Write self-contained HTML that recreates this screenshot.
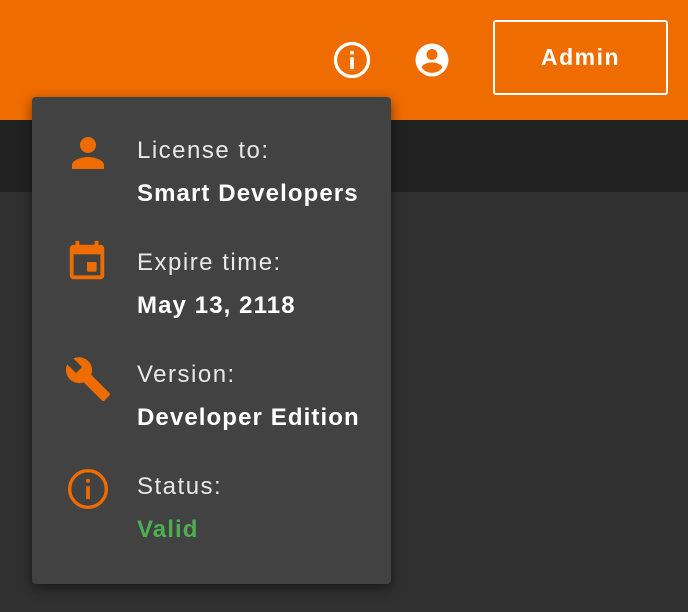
<!DOCTYPE html>
<html><head><style>
body{margin:0;width:688px;height:612px;background:#303030;font-family:"Liberation Sans",sans-serif;position:relative;overflow:hidden}
.hdr{position:absolute;left:0;top:0;width:688px;height:120px;background:#ef6c00}
.band{position:absolute;left:0;top:120px;width:688px;height:72px;background:#212121}
.btn{position:absolute;left:493px;top:20px;width:171px;height:71px;border:2px solid #fff;border-radius:3px;color:#fff;font-size:23px;font-weight:bold;text-align:center;line-height:71px;letter-spacing:1.5px}
.pop{position:absolute;left:32px;top:97px;width:359px;height:487px;background:#424242;border-radius:4px;box-shadow:0 4px 12px rgba(0,0,0,.5)}
.l{position:absolute;left:105px;color:#e8e8e8;font-size:24px;letter-spacing:1.5px}
.v{position:absolute;left:105px;color:#fff;font-size:24px;font-weight:bold;letter-spacing:1.1px}
svg{position:absolute}
</style></head><body>
<div class="hdr"></div><div class="band"></div>
<svg style="left:330px;top:38px" width="44" height="44" viewBox="0 0 24 24"><circle cx="12" cy="12" r="9" fill="none" stroke="#fff" stroke-width="1.8"/><rect x="11" y="10.5" width="2" height="6.5" fill="#fff"/><rect x="11" y="7" width="2" height="2" fill="#fff"/></svg>
<svg style="left:410px;top:38px" width="44" height="44" viewBox="0 0 24 24"><path fill="#fff" d="M12 3a9 9 0 1 0 0 18 9 9 0 0 0 0-18zm0 3a3 3 0 1 1 0 6 3 3 0 0 1 0-6zm0 13a7 7 0 0 1-5.6-2.8c.03-1.9 3.7-2.9 5.6-2.9s5.57 1 5.6 2.9A7 7 0 0 1 12 19z"/></svg>
<div class="btn">Admin</div>
<div class="pop">
<svg style="left:32px;top:32px" width="48" height="48" viewBox="0 0 24 24"><path fill="#ef6c00" d="M12 12a4 4 0 1 0 0-8 4 4 0 0 0 0 8zm0 2c-2.7 0-8 1.3-8 4v2h16v-2c0-2.7-5.3-4-8-4z"/></svg>
<div class="l" style="top:40px">License to:</div>
<div class="v" style="top:83px">Smart Developers</div>
<svg style="left:32px;top:140px" width="46" height="50" viewBox="0 0 24 24"><path fill="#ef6c00" d="M17 12h-5v5h5v-5zM16 1v2H8V1H6v2H5a2 2 0 0 0-2 2v14a2 2 0 0 0 2 2h14a2 2 0 0 0 2-2V5a2 2 0 0 0-2-2h-1V1h-2zm3 18H5V8h14v11z"/></svg>
<div class="l" style="top:152px">Expire time:</div>
<div class="v" style="top:195px">May 13, 2118</div>
<svg style="left:32px;top:258px" width="48" height="48" viewBox="0 0 24 24"><path fill="#ef6c00" d="M22.7 19l-9.1-9.1c.9-2.3.4-5-1.5-6.9-2-2-5-2.4-7.4-1.3L9 6 6 9 1.6 4.7C.4 7.1.9 10.1 2.9 12.1c1.9 1.9 4.6 2.4 6.9 1.5l9.1 9.1c.4.4 1 .4 1.4 0l2.3-2.3c.5-.4.5-1.1.1-1.4z"/></svg>
<div class="l" style="top:264px">Version:</div>
<div class="v" style="top:307px">Developer Edition</div>
<svg style="left:34px;top:370px" width="44" height="44" viewBox="0 0 24 24"><circle cx="12" cy="12" r="10" fill="none" stroke="#ef6c00" stroke-width="1.8"/><rect x="11" y="10.5" width="2" height="7" fill="#ef6c00"/><rect x="11" y="6.5" width="2" height="2" fill="#ef6c00"/></svg>
<div class="l" style="top:376px">Status:</div>
<div class="v" style="top:419px;color:#4caf50">Valid</div>
</div>
</body></html>
